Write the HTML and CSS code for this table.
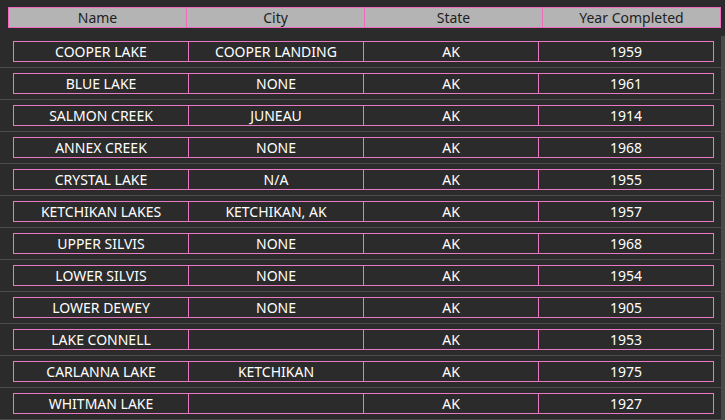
FILE: index.html
```html
<!DOCTYPE html>
<html>
<head>
<meta charset="utf-8">
<link rel="stylesheet" href="styles.css">
</head>
<body>
<div class="header">
  <div class="hcell">Name</div>
  <div class="hcell">City</div>
  <div class="hcell">State</div>
  <div class="hcell">Year Completed</div>
</div>
<div class="body">
  <div class="list">
    <div class="row"><div class="box"><div class="cell">COOPER LAKE</div><div class="cell">COOPER LANDING</div><div class="cell">AK</div><div class="cell">1959</div></div></div>
    <div class="row"><div class="box"><div class="cell">BLUE LAKE</div><div class="cell">NONE</div><div class="cell">AK</div><div class="cell">1961</div></div></div>
    <div class="row"><div class="box"><div class="cell">SALMON CREEK</div><div class="cell">JUNEAU</div><div class="cell">AK</div><div class="cell">1914</div></div></div>
    <div class="row"><div class="box"><div class="cell">ANNEX CREEK</div><div class="cell">NONE</div><div class="cell">AK</div><div class="cell">1968</div></div></div>
    <div class="row"><div class="box"><div class="cell">CRYSTAL LAKE</div><div class="cell">N/A</div><div class="cell">AK</div><div class="cell">1955</div></div></div>
    <div class="row"><div class="box"><div class="cell">KETCHIKAN LAKES</div><div class="cell">KETCHIKAN, AK</div><div class="cell">AK</div><div class="cell">1957</div></div></div>
    <div class="row"><div class="box"><div class="cell">UPPER SILVIS</div><div class="cell">NONE</div><div class="cell">AK</div><div class="cell">1968</div></div></div>
    <div class="row"><div class="box"><div class="cell">LOWER SILVIS</div><div class="cell">NONE</div><div class="cell">AK</div><div class="cell">1954</div></div></div>
    <div class="row"><div class="box"><div class="cell">LOWER DEWEY</div><div class="cell">NONE</div><div class="cell">AK</div><div class="cell">1905</div></div></div>
    <div class="row"><div class="box"><div class="cell">LAKE CONNELL</div><div class="cell"></div><div class="cell">AK</div><div class="cell">1953</div></div></div>
    <div class="row"><div class="box"><div class="cell">CARLANNA LAKE</div><div class="cell">KETCHIKAN</div><div class="cell">AK</div><div class="cell">1975</div></div></div>
    <div class="row"><div class="box"><div class="cell">WHITMAN LAKE</div><div class="cell"></div><div class="cell">AK</div><div class="cell">1927</div></div></div>
  </div>
  <div class="scrollbar"></div>
</div>
</body>
</html>
```
FILE: styles.css
```css
html, body {
  margin: 0;
  padding: 0;
  background: #2b2b2b;
  height: 420px;
  overflow: hidden;
  font-family: "Noto Sans", "Open Sans", sans-serif;
  font-size: 14px;
}
.header {
  display: grid;
  grid-template-columns: 178px 178px 178px 179px;
  width: 713px;
  margin: 7px 0 0 8px;
  box-sizing: border-box;
  background: #b4b4b4;
  border-top: 1px solid #f06ac0;
  border-bottom: 1px solid #f06ac0;
}
.hcell {
  box-sizing: border-box;
  border-left: 1px solid #f06ac0;
  height: 19px;
  line-height: 19px;
  text-align: center;
  color: #1e1e1e;
}
.hcell:last-child {
  border-right: 1px solid #f06ac0;
}
.body {
  display: flex;
  margin-top: 8px;
}
.list {
  width: 721px;
}
.row {
  padding: 5px 0 5px 13px;
  border-bottom: 1px solid #4c4c4c;
}
.box {
  display: grid;
  grid-template-columns: 175px 175px 175px 176px;
  width: 701px;
  box-sizing: border-box;
  border-top: 1px solid #e878c4;
  border-bottom: 1px solid #e878c4;
}
.cell {
  box-sizing: border-box;
  border-left: 1px solid #e878c4;
  height: 19px;
  line-height: 19px;
  text-align: center;
  color: #ffffff;
}
.cell:last-child {
  border-right: 1px solid #e878c4;
}
.scrollbar {
  width: 4px;
  background: #4a4a4a;
  height: 400px;
}
```
